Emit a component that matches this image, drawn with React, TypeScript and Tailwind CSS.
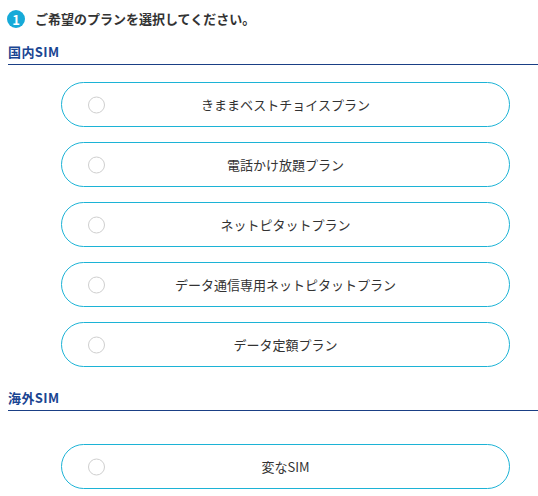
import React from "react";

const font = { fontFamily: '"Noto Sans CJK JP", "Noto Sans", sans-serif' };

function Plan({ label }: { label: string }) {
  return (
    <div className="relative flex h-[45px] w-[449px] items-center justify-center rounded-full border border-[#1cb3d6] bg-white">
      <span className="absolute left-[26px] top-1/2 h-[17px] w-[17px] -translate-y-1/2 rounded-full border border-[#cfcfcf] bg-white" />
      <span className="text-[13px] text-[#333333]">{label}</span>
    </div>
  );
}

function Heading({ children }: { children: React.ReactNode }) {
  return (
    <div className="ml-[8px] border-b border-[#1a3f85] pb-[2px]">
      <span className="text-[13px] font-bold leading-[16px] tracking-[0.4px] text-[#1a4592]">{children}</span>
    </div>
  );
}

export default function App() {
  return (
    <div className="h-[496px] w-[538px] bg-white" style={font}>
      <div className="flex items-center gap-[10px] pl-[7px] pt-[10px]">
        <span className="flex h-[18px] w-[18px] items-center justify-center rounded-full bg-[#16aad8] text-[13px] font-bold leading-none text-white">
          1
        </span>
        <span className="text-[13px] font-bold leading-[18px] text-[#333333]">
          ご希望のプランを選択してください。
        </span>
      </div>
      <div className="mt-[10px]">
        <Heading>国内SIM</Heading>
      </div>
      <div className="mt-[17px] flex flex-col gap-[15px] pl-[61px]">
        <Plan label="きままベストチョイスプラン" />
        <Plan label="電話かけ放題プラン" />
        <Plan label="ネットピタットプラン" />
        <Plan label="データ通信専用ネットピタットプラン" />
        <Plan label="データ定額プラン" />
      </div>
      <div className="mt-[17px]">
        <Heading>海外SIM</Heading>
      </div>
      <div className="mt-[33px] pl-[61px]">
        <Plan label="変なSIM" />
      </div>
    </div>
  );
}
